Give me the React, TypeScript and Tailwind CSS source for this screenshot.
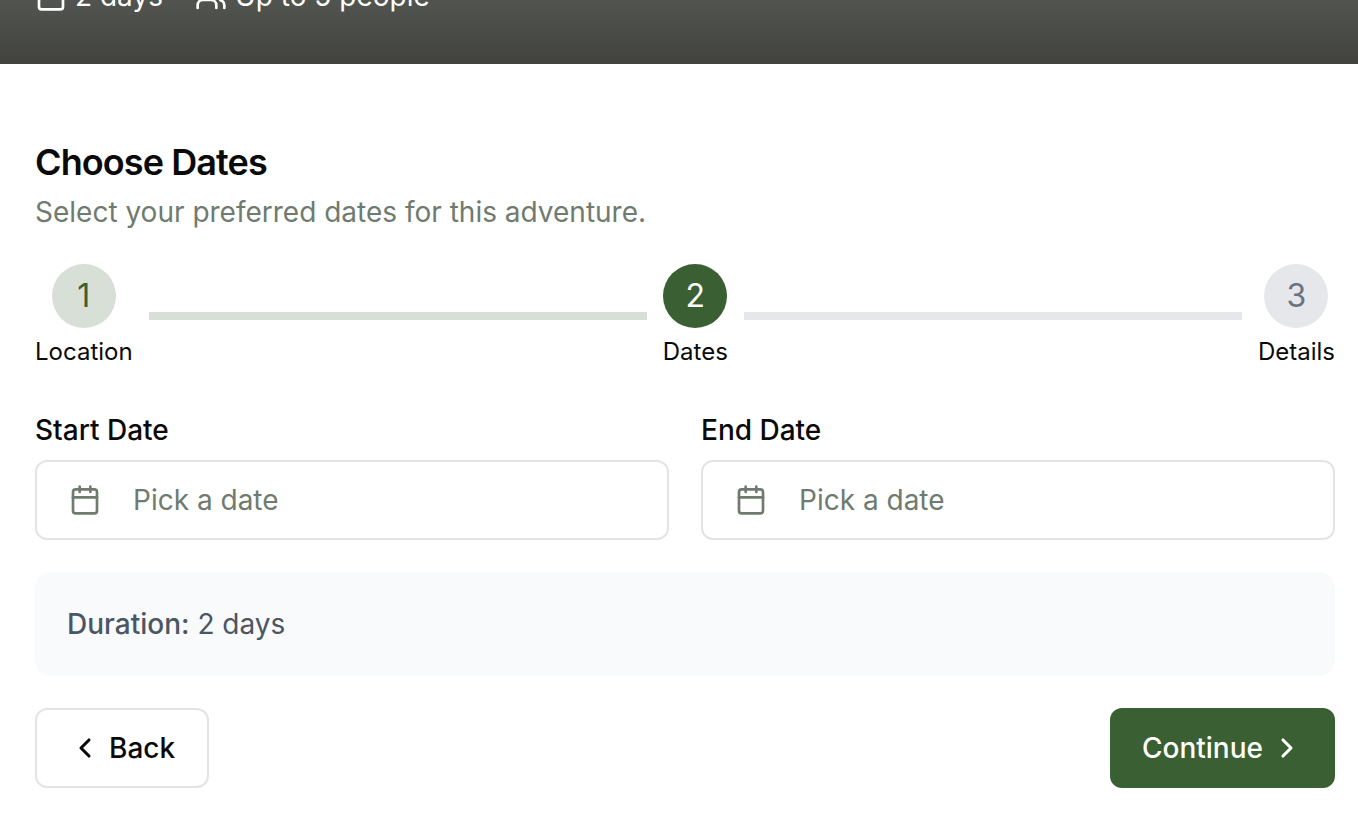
import { Calendar, ChevronLeft, ChevronRight, Users } from "lucide-react";

type Step = { number: number; label: string; circle: string };

const steps: Step[] = [
  { number: 1, label: "Location", circle: "bg-[#d8dfd7] text-[#3a5f32]" },
  { number: 2, label: "Dates", circle: "bg-[#3a5f32] text-white" },
  { number: 3, label: "Details", circle: "bg-[#e5e7eb] text-[#6b7280]" },
];

function StepItem({ number, label, circle }: Step) {
  return (
    <li className="flex flex-col items-center gap-2">
      <span className={`flex size-16 items-center justify-center rounded-full text-[32px] leading-12 ${circle}`}>
        {number}
      </span>
      <span className="text-2xl leading-8">{label}</span>
    </li>
  );
}

function DateField({ id, label }: { id: string; label: string }) {
  return (
    <div className="flex flex-col gap-4">
      <label htmlFor={id} className="text-[28px] leading-7 font-medium">
        {label}
      </label>
      <button
        id={id}
        type="button"
        className="flex h-20 w-full items-center gap-8 rounded-xl border-2 border-[#e4e4e4] bg-white px-8 text-[28px] leading-10 text-[#6f7b6f]"
      >
        <Calendar className="size-8 shrink-0" />
        Pick a date
      </button>
    </div>
  );
}

export default function App() {
  return (
    <div className="bg-white font-['Inter',sans-serif] text-[#0a0a0a] antialiased [font-optical-sizing:none]">
      <header className="flex h-16 items-end gap-8 overflow-hidden bg-linear-to-b from-[#51544f] to-[#42433f] pr-6 pb-12 pl-[35px] text-[28px] leading-10 text-white">
        <div className="flex items-center gap-2">
          <Calendar className="size-8" />
          <span>2 days</span>
        </div>
        <div className="flex items-center gap-2">
          <Users className="size-8" />
          <span>Up to 5 people</span>
        </div>
      </header>

      <main className="flex flex-col gap-8 pt-20 pr-[23px] pb-8 pl-[35px]">
        <div className="flex flex-col gap-3">
          <h1 className="text-4xl leading-9 font-semibold tracking-tight">Choose Dates</h1>
          <p className="text-[28px] leading-10 text-[#6f7b6f]">Select your preferred dates for this adventure.</p>
        </div>

        <ol className="mb-4 flex items-center gap-4">
          <StepItem {...steps[0]} />
          <li aria-hidden="true" className="h-2 flex-1 bg-[#d8dfd7]" />
          <StepItem {...steps[1]} />
          <li aria-hidden="true" className="h-2 flex-1 bg-[#e5e7eb]" />
          <StepItem {...steps[2]} />
        </ol>

        <div className="grid grid-cols-2 gap-8">
          <DateField id="start-date" label="Start Date" />
          <DateField id="end-date" label="End Date" />
        </div>

        <div className="rounded-2xl bg-[#f9fafc] p-8 text-[28px] leading-10 text-[#4b5563]">
          <span className="font-medium">Duration:</span> 2 days
        </div>

        <div className="flex justify-between">
          <button
            type="button"
            className="flex h-20 items-center gap-2 rounded-xl border-2 border-[#e4e4e4] bg-white px-8 text-[28px] leading-10 font-medium"
          >
            <ChevronLeft className="size-8" strokeWidth={2.3} />
            Back
          </button>
          <button
            type="button"
            className="flex h-20 items-center gap-2 rounded-xl bg-[#3a5f32] px-8 text-[28px] leading-10 font-medium text-white"
          >
            Continue
            <ChevronRight className="size-8" strokeWidth={2.3} />
          </button>
        </div>
      </main>
    </div>
  );
}
